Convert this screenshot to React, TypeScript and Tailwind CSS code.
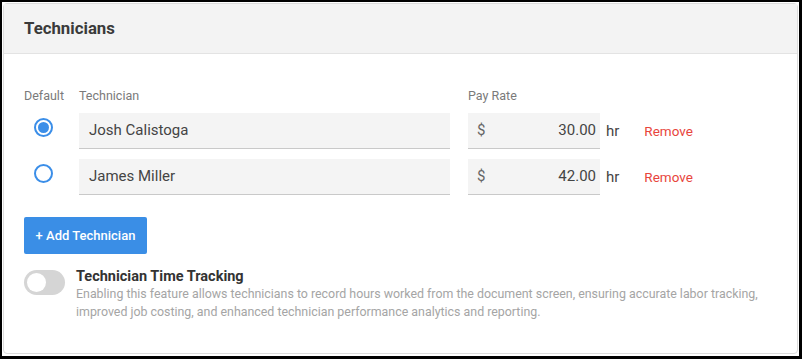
import React from "react";

type Tech = { name: string; rate: string; isDefault: boolean };

const techs: Tech[] = [
  { name: "Josh Calistoga", rate: "30.00", isDefault: true },
  { name: "James Miller", rate: "42.00", isDefault: false },
];

const Radio = ({ checked }: { checked: boolean }) => (
  <span className="flex h-[19px] w-[19px] items-center justify-center rounded-full border-2 border-[#3b8ee8] bg-white">
    {checked && <span className="h-[11px] w-[11px] rounded-full bg-[#3b8ee8]" />}
  </span>
);

export default function App() {
  return (
    <div className="h-[359px] w-[802px] border-t-2 border-l-2 border-r-[3px] border-b-[3px] border-black bg-white p-[1px] pb-[2px] font-['Roboto',sans-serif]">
      <div className="flex h-full flex-col rounded-[4px] border border-[#dcdcdc] bg-white">
        <div className="flex h-[50px] items-center border-b border-[#e3e3e3] bg-[#f3f3f3] pl-5">
          <h2 className="text-[16.8px] font-bold text-[#3a3a3a]">Technicians</h2>
        </div>

        <div className="flex flex-col pl-5 pt-[33px]">
          <div className="flex text-[12.5px] leading-[18px] text-[#7a7a7a]">
            <span className="w-[55px]">Default</span>
            <span className="w-[389px]">Technician</span>
            <span>Pay Rate</span>
          </div>

          <div className="mt-[8px] flex flex-col gap-[10px]">
            {techs.map((t) => (
              <div key={t.name} className="flex items-center">
                <div className="flex w-[55px] items-center pl-[10px] pb-[7px]">
                  <Radio checked={t.isDefault} />
                </div>
                <div className="flex h-[36px] w-[371px] items-center border-b border-[#c9c9c9] bg-[#f4f4f4] pl-[10px] text-[15px] text-[#444]">
                  {t.name}
                </div>
                <div className="ml-[18px] flex h-[36px] w-[132px] items-center justify-between border-b border-[#c9c9c9] bg-[#f4f4f4] pl-[9px] pr-[4px] text-[15px] text-[#444]">
                  <span className="text-[#666]">$</span>
                  <span>{t.rate}</span>
                </div>
                <span className="ml-[6px] text-[15px] text-[#444]">hr</span>
                <button className="ml-[25px] text-[13.5px] text-[#e8453c]">Remove</button>
              </div>
            ))}
          </div>

          <button className="mt-[22px] h-[37px] w-[123px] rounded-[2px] bg-[#3a8ee6] text-[13px] font-medium text-white">
            + Add Technician
          </button>

          <div className="mt-[15px] flex gap-[11px]">
            <span className="mt-[1px] flex h-[25px] w-[41px] shrink-0 items-center rounded-full bg-[#d5d5d5] px-[3px]">
              <span className="h-[19px] w-[19px] rounded-full bg-white" />
            </span>
            <div className="flex w-[705px] flex-col">
              <span className="text-[14.5px] font-bold leading-[16px] text-[#333]">Technician Time Tracking</span>
              <p className="text-[12.4px] leading-[18px] text-[#a5a5a5]">
                Enabling this feature allows technicians to record hours worked from the document screen, ensuring accurate labor tracking, improved job costing, and enhanced technician performance analytics and reporting.
              </p>
            </div>
          </div>
        </div>
      </div>
    </div>
  );
}
